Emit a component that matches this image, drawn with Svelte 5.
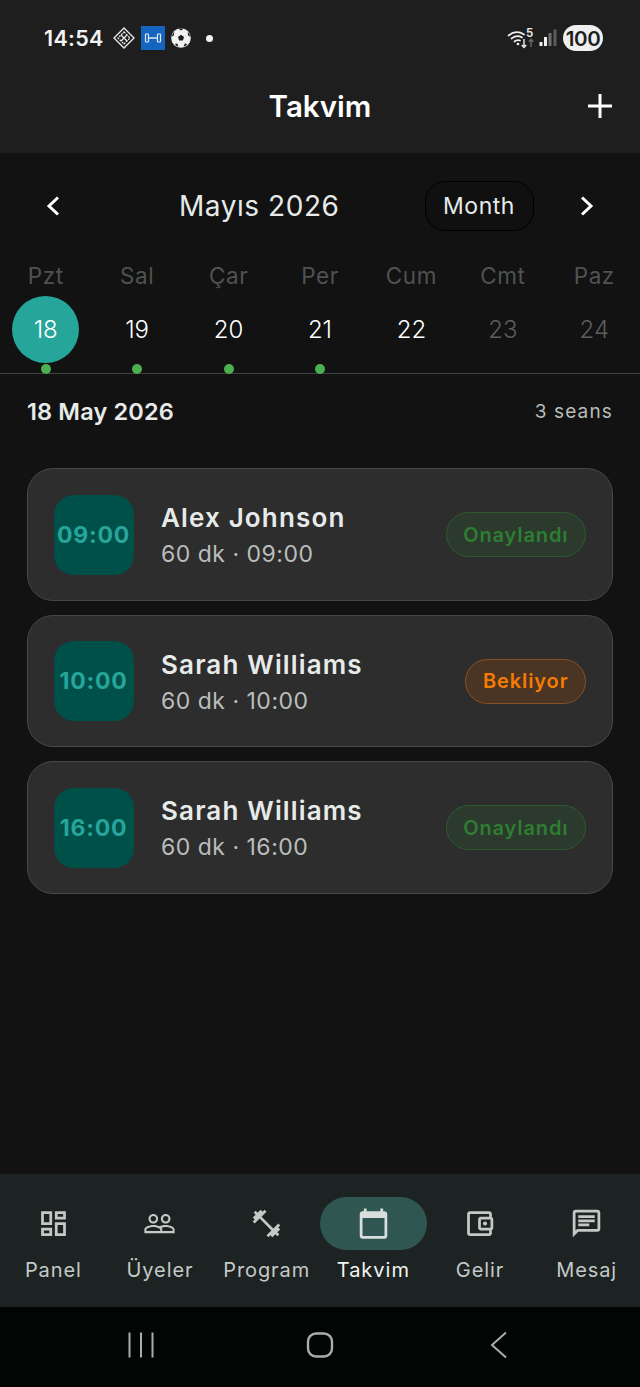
<script>
  const weekdays = ['Pzt', 'Sal', 'Çar', 'Per', 'Cum', 'Cmt', 'Paz'];
  const days = [
    { n: 18, sel: true, dot: true },
    { n: 19, dot: true },
    { n: 20, dot: true },
    { n: 21, dot: true },
    { n: 22 },
    { n: 23, off: true },
    { n: 24, off: true }
  ];
  const sessions = [
    { t: '09:00', name: 'Alex Johnson', st: 'Onaylandı', kind: 'ok' },
    { t: '10:00', name: 'Sarah Williams', st: 'Bekliyor', kind: 'wait' },
    { t: '16:00', name: 'Sarah Williams', st: 'Onaylandı', kind: 'ok' }
  ];
</script>

<div class="page">
  <header class="top">
    <div class="status">
      <span class="clock">14:54</span>
      <svg class="ic-d" viewBox="0 0 22 22" width="22" height="22" fill="none" stroke="#eee" stroke-width="1.3">
        <path d="M11 1 21 11 11 21 1 11Z" />
        <path d="M11 5 17 11 11 17 5 11Z" stroke-dasharray="2 1" />
        <path d="M8 8 14 14M14 8 8 14" stroke-width="1.2" />
      </svg>
      <span class="blue">
        <svg viewBox="0 0 24 24" width="24" height="24" fill="none" stroke="#dfe8f2" stroke-width="1.2">
          <rect x="4.500" y="8" width="3" height="8" rx="0.500" />
          <rect x="16.500" y="8" width="3" height="8" rx="0.500" />
          <path d="M7.500 12h9" stroke-width="1.500" />
        </svg>
      </span>
      <svg class="ball" viewBox="0 0 20 20" width="20" height="20">
        <circle cx="10" cy="10" r="9.800" fill="#f1f1f1" />
        <path d="M10 6.800 13 9 11.900 12.500H8.100L7 9Z" fill="#1e1e1e" />
        <path d="M7.500 .8 10 2.400 12.500 .8 10 .3ZM.8 8.500 2.800 7.800 3.200 4.200 2 5ZM19.200 8.500 17.200 7.800 16.800 4.200 18 5ZM3.800 16 6.300 15.600 7.300 18.600 5.500 18ZM16.200 16 13.700 15.600 12.700 18.600 14.500 18Z" fill="#1e1e1e" />
      </svg>
      <span class="note-dot"></span>
      <span class="grow"></span>
      <svg class="wifi" viewBox="0 0 28 20" width="28" height="20" fill="none">
        <path d="M1.500 6.500Q9 .5 17 5.500M4.500 9.500Q10 5.500 15 8.500M7.500 12.500Q10 10.500 13 11.500" stroke="#f0f0f0" stroke-width="1.700" stroke-linecap="round" />
        <circle cx="11" cy="15" r="1.300" fill="#f0f0f0" />
        <path d="M17 10v8.500M14.800 16 17 18.500 19.200 16" stroke="#f0f0f0" stroke-width="1.400" />
        <path d="M24 18v-7.500M21.800 12.800 24 10.400 26.200 12.800" stroke="#6e6e6e" stroke-width="1.400" />
      </svg>
      <span class="five">5</span>
      <svg class="bars" viewBox="0 0 18 18" width="18" height="18">
        <rect x="0.500" y="13" width="3" height="4" fill="#f0f0f0" />
        <rect x="5" y="8" width="3" height="9" fill="#f0f0f0" />
        <rect x="9.500" y="4" width="3" height="13" fill="#6e6e6e" />
        <rect x="14.500" y="0.500" width="3" height="16.500" fill="#5c5c5c" />
      </svg>
      <span class="batt">100</span>
    </div>
    <div class="appbar">
      <h1>Takvim</h1>
      <svg class="plus" viewBox="0 0 24 24" width="24" height="24">
        <path d="M12 0v24M0 12h24" stroke="#fff" stroke-width="3" />
      </svg>
    </div>
  </header>

  <section class="cal">
    <div class="monthrow">
      <svg class="chev" viewBox="0 0 24 24" width="24" height="24" fill="none" stroke="#fff" stroke-width="3"><path d="M17 3.500 8 12 17 20.500" /></svg>
      <div class="mtitle">Mayıs 2026</div>
      <div class="mode">Month</div>
      <svg class="chev next" viewBox="0 0 24 24" width="24" height="24" fill="none" stroke="#fff" stroke-width="3"><path d="M7 3.500 16 12 7 20.500" /></svg>
    </div>
    <div class="wk">
      {#each weekdays as w}<span>{w}</span>{/each}
    </div>
    <div class="dates">
      {#each days as d}
        <div class="day">
          <span class="num" class:sel={d.sel} class:off={d.off}>{d.n}</span>
          {#if d.dot}<span class="dot"></span>{/if}
        </div>
      {/each}
    </div>
  </section>

  <main class="list">
    <div class="head">
      <strong>18 May 2026</strong>
      <span>3 seans</span>
    </div>
    <div class="cards">
      {#each sessions as s}
        <article class="card">
          <div class="tbox">{s.t}</div>
          <div class="info">
            <div class="name">{s.name}</div>
            <div class="sub">60 dk · {s.t}</div>
          </div>
          <div class="badge {s.kind}">{s.st}</div>
        </article>
      {/each}
    </div>
  </main>

  <nav class="nav">
    <div class="tab">
      <span class="icw">
        <svg viewBox="0 0 24 24" width="33" height="33"><path d="M19 5v2h-4V5h4M9 5v6H5V5h4m10 8v6h-4v-6h4M9 17v2H5v-2h4M21 3h-8v6h8V3zM11 3H3v10h8V3zm10 8h-8v10h8V11zm-10 4H3v6h8v-6z" /></svg>
      </span>
      <span class="lbl">Panel</span>
    </div>
    <div class="tab">
      <span class="icw">
        <svg viewBox="0 0 24 24" width="33" height="33"><path d="M16.500 13c-1.200 0-3.070.34-4.500 1-1.430-.67-3.300-1-4.500-1C5.330 13 1 14.080 1 16.250V19h22v-2.750c0-2.170-4.330-3.250-6.500-3.250zm-4 4.500h-10v-1.250c0-.54 2.560-1.750 5-1.750s5 1.210 5 1.750v1.250zm9 0H14v-1.250c0-.46-.2-.86-.52-1.220.88-.3 1.960-.53 3.020-.53 2.440 0 5 1.210 5 1.750v1.250zM7.500 12c1.930 0 3.500-1.570 3.500-3.500S9.430 5 7.500 5 4 6.570 4 8.500 5.570 12 7.500 12zm0-5.500c1.100 0 2 .9 2 2s-.9 2-2 2-2-.9-2-2 .9-2 2-2zm9 5.500c1.930 0 3.500-1.570 3.500-3.500S18.430 5 16.500 5 13 6.570 13 8.500s1.570 3.500 3.500 3.500zm0-5.500c1.100 0 2 .9 2 2s-.9 2-2 2-2-.9-2-2 .9-2 2-2z" /></svg>
      </span>
      <span class="lbl">Üyeler</span>
    </div>
    <div class="tab">
      <span class="icw">
        <svg viewBox="0 0 24 24" width="33" height="33"><path d="M20.570 14.860 22 13.430 20.570 12 17 15.570 8.430 7 12 3.430 10.570 2 9.140 3.430 7.710 2 5.570 4.140 4.140 2.710 2.710 4.140l1.430 1.430L2 7.710l1.430 1.430L2 10.570 3.430 12 7 8.430 15.570 17 12 20.570 13.430 22l1.430-1.430L16.290 22l2.140-2.140 1.430 1.430 1.430-1.430-1.430-1.430L22 16.290z" /></svg>
      </span>
      <span class="lbl">Program</span>
    </div>
    <div class="tab active">
      <span class="icw">
        <svg viewBox="0 0 24 24" width="33" height="33"><path d="M20 3h-1V1h-2v2H7V1H5v2H4c-1.100 0-2 .9-2 2v16c0 1.100.9 2 2 2h16c1.100 0 2-.9 2-2V5c0-1.100-.9-2-2-2zm0 18H4V8h16v13z" /></svg>
      </span>
      <span class="lbl">Takvim</span>
    </div>
    <div class="tab">
      <span class="icw">
        <svg viewBox="0 0 24 24" width="33" height="33"><path d="M21 7.280V5c0-1.100-.9-2-2-2H5c-1.110 0-2 .9-2 2v14c0 1.100.89 2 2 2h14c1.100 0 2-.9 2-2v-2.280c.59-.35 1-.98 1-1.720V9c0-.74-.41-1.380-1-1.720zM20 9v6h-7V9h7zM5 19V5h14v2h-6c-1.100 0-2 .9-2 2v6c0 1.100.9 2 2 2h6v2H5z" /><circle cx="16" cy="12" r="1.500" /></svg>
      </span>
      <span class="lbl">Gelir</span>
    </div>
    <div class="tab">
      <span class="icw">
        <svg viewBox="0 0 24 24" width="33" height="33"><path d="M20 2H4c-1.100 0-2 .9-2 2v18l4-4h14c1.100 0 2-.9 2-2V4c0-1.100-.9-2-2-2zm0 14H5.170L4 17.170V4h16v12zM6 12h8v2H6zm0-3h12v2H6zm0-3h12v2H6z" /></svg>
      </span>
      <span class="lbl">Mesaj</span>
    </div>
  </nav>

  <footer class="sys">
    <svg viewBox="0 0 28 28" width="28" height="28" fill="none" stroke="#a9adac" stroke-width="2"><path d="M2.500 1.500v25M14 1.500v25M25.500 1.500v25" /></svg>
    <svg viewBox="0 0 28 28" width="28" height="28" fill="none" stroke="#a9adac" stroke-width="2.400"><rect x="2" y="2.500" width="24" height="23" rx="8" /></svg>
    <svg viewBox="0 0 28 28" width="28" height="28" fill="none" stroke="#a9adac" stroke-width="2"><path d="M21 1.500 7 14 21 26.500" /></svg>
  </footer>
</div>

<style>
  :global(body) {
    margin: 0;
    background: #121212;
  }
  .page {
    width: 640px;
    height: 1387px;
    display: flex;
    flex-direction: column;
    background: #121212;
    font-family: Inter, "Liberation Sans", sans-serif;
    color: #e5eae8;
    overflow: hidden;
  }
  .top {
    height: 153px;
    background: #1e1e1e;
    flex: none;
    box-sizing: border-box;
    padding-top: 22px;
  }
  .status {
    height: 32px;
    display: flex;
    align-items: center;
    padding: 0 37px 0 44px;
    position: relative;
  }
  .clock {
    font-size: 21.500px;
    font-weight: 600;
    color: #f2f2f2;
    margin-right: 9px;
    letter-spacing: 0.300px;
  }
  .ic-d { margin-right: 6px; }
  .blue {
    width: 24px;
    height: 24px;
    background: #1565c0;
    display: block;
    margin-right: 6px;
  }
  .blue svg { display: block; }
  .note-dot {
    width: 7px;
    height: 7px;
    border-radius: 50%;
    background: #f2f2f2;
    margin-left: 15px;
  }
  .grow { flex: 1; }
  .wifi { margin-right: 4px; margin-top: 2px; }
  .five {
    position: absolute;
    left: 526px;
    top: 4px;
    font-size: 11.500px;
    line-height: 14px;
    font-weight: 600;
    color: #eee;
  }
  .bars { margin-right: 6px; }
  .batt {
    width: 40px;
    height: 26px;
    border-radius: 13px;
    background: #eef0ef;
    color: #1e1e1e;
    font-size: 20.500px;
    font-weight: 600;
    letter-spacing: -0.400px;
    display: flex;
    align-items: center;
    justify-content: center;
  }
  .appbar {
    height: 99px;
    box-sizing: border-box;
    padding-top: 5px;
    position: relative;
    display: flex;
    align-items: center;
    justify-content: center;
  }
  h1 {
    margin: 0;
    font-size: 29.500px;
    font-weight: 600;
    color: #fff;
  }
  .plus {
    position: absolute;
    right: 28px;
    top: 40px;
  }
  .cal {
    height: 221px;
    flex: none;
    box-sizing: border-box;
    border-bottom: 1px solid #3d4442;
    position: relative;
  }
  .monthrow {
    height: 50px;
    margin-top: 28px;
    display: flex;
    align-items: center;
    position: relative;
  }
  .chev { position: absolute; left: 41px; top: 13px; }
  .chev.next { left: 575px; }
  .mtitle {
    position: absolute;
    left: 179px;
    font-size: 28px;
    color: #e6ebe9;
    letter-spacing: 0.550px;
  }
  .mode {
    position: absolute;
    left: 424.500px;
    width: 109px;
    height: 50px;
    box-sizing: border-box;
    border: 1.500px solid #000;
    background: #101010;
    border-radius: 20px;
    display: flex;
    align-items: center;
    justify-content: center;
    font-size: 23px;
    color: #e6ebe9;
    letter-spacing: 0.550px;
  }
  .wk {
    display: grid;
    grid-template-columns: repeat(7, 1fr);
    margin-top: 20px;
    height: 50px;
    text-align: center;
    font-size: 22.500px;
    line-height: 50px;
    color: #4e5351;
    letter-spacing: 0.600px;
  }
  .dates {
    display: grid;
    grid-template-columns: repeat(7, 1fr);
    margin-top: -5px;
  }
  .day {
    display: flex;
    flex-direction: column;
    align-items: center;
    position: relative;
  }
  .num {
    width: 67px;
    height: 67px;
    border-radius: 50%;
    display: flex;
    align-items: center;
    justify-content: center;
    font-size: 24px;
    font-weight: 300;
    color: #fff;
  }
  .num.sel { background: #26a69a; }
  .num.off { color: #5a5f5d; }
  .dot {
    width: 10px;
    height: 10px;
    border-radius: 50%;
    background: #4caf50;
    margin-top: 1px;
  }
  .list {
    flex: 1;
    box-sizing: border-box;
    padding: 0 27px;
  }
  .head {
    height: 74px;
    display: flex;
    justify-content: space-between;
    align-items: center;
  }
  .head strong {
    font-size: 23.500px;
    font-weight: 600;
    color: #e6ebe9;
    letter-spacing: 0.150px;
  }
  .head span {
    font-size: 19px;
    color: #b9bebc;
    letter-spacing: 1.150px;
  }
  .cards {
    margin-top: 20px;
    display: flex;
    flex-direction: column;
    gap: 14px;
  }
  .card {
    height: 132.500px;
    box-sizing: border-box;
    background: #2d2d2d;
    border: 1.500px solid #454a48;
    border-radius: 26px;
    display: flex;
    align-items: center;
    padding: 0 26px 0 25.500px;
  }
  .tbox {
    width: 80px;
    height: 80px;
    flex: none;
    margin-top: 0.500px;
    border-radius: 20px;
    background: #00504a;
    color: #26a69a;
    font-size: 23px;
    font-weight: 700;
    letter-spacing: 0.800px;
    display: flex;
    align-items: center;
    justify-content: center;
  }
  .info {
    flex: 1;
    margin-left: 27.500px;
    margin-top: 1.500px;
  }
  .name {
    font-size: 26px;
    font-weight: 600;
    color: #e6ebe9;
    letter-spacing: 1.150px;
    line-height: 34px;
  }
  .sub {
    font-size: 23px;
    color: #b9bebc;
    letter-spacing: 0.500px;
    line-height: 30px;
    margin-top: 4px;
  }
  .badge {
    height: 45px;
    box-sizing: border-box;
    margin-top: 1px;
    border-radius: 23px;
    border: 1.500px solid;
    padding: 0 16.500px;
    display: flex;
    align-items: center;
    font-size: 20px;
    font-weight: 600;
    letter-spacing: 0.900px;
  }
  .badge.ok {
    color: #2e7d32;
    background: #2b3a2c;
    border-color: #2c5a2f;
  }
  .badge.wait {
    color: #f57c00;
    background: #4a3424;
    border-color: #8a5022;
  }
  .nav {
    height: 133px;
    flex: none;
    background: #1d2322;
    display: grid;
    grid-template-columns: repeat(6, 1fr);
    box-sizing: border-box;
    padding-top: 23px;
  }
  .tab {
    display: flex;
    flex-direction: column;
    align-items: center;
    min-width: 0;
  }
  .icw {
    width: 100%;
    height: 53px;
    border-radius: 27px;
    display: flex;
    align-items: center;
    justify-content: center;
  }
  .icw svg { fill: #c4c9c7; }
  .active .icw { background: #2f5650; }
  .active .icw svg { fill: #d9dedc; }
  .lbl {
    margin-top: 7px;
    font-size: 20px;
    line-height: 26px;
    color: #c4c9c7;
    letter-spacing: 0.900px;
    white-space: nowrap;
  }
  .active .lbl { color: #f0f4f2; letter-spacing: 1px; }
  .sys {
    height: 80px;
    flex: none;
    background: #030404;
    display: flex;
    justify-content: center;
    gap: 151px;
    padding-top: 24px;
    box-sizing: border-box;
  }
</style>
